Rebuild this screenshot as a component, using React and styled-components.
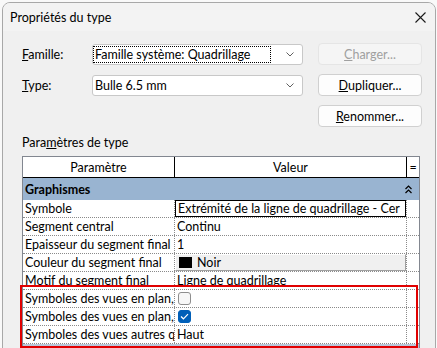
import React from "react";
import styled, { createGlobalStyle } from "styled-components";

const GlobalStyle = createGlobalStyle`
  body {
    margin: 0;
    background: #f9f9f9;
    font-family: Lato, "Liberation Sans", sans-serif;
    overflow: hidden;
  }
`;

const rows = [
  { name: "Symbole", kind: "edit", value: "Extrémité de la ligne de quadrillage - Cer" },
  { name: "Segment central", value: "Continu" },
  { name: "Epaisseur du segment final", value: "1" },
  { name: "Couleur du segment final", kind: "color", value: "Noir" },
  { name: "Motif du segment final", value: "Ligne de quadrillage" },
  { name: "Symboles des vues en plan,", kind: "check", checked: false },
  { name: "Symboles des vues en plan,", kind: "check", checked: true },
  { name: "Symboles des vues autres q", value: "Haut" },
];

export default function App() {
  return (
    <>
      <GlobalStyle />
      <Window>
        <TitleBar>
          <Title>Propriétés du type</Title>
          <svg width="11" height="11" viewBox="0 0 11 11">
            <path d="M0.5 0.5 L10.5 10.5 M10.5 0.5 L0.5 10.5" stroke="#1a1a1a" strokeWidth="1.1" />
          </svg>
        </TitleBar>
        <Body>
          <FormGrid>
            <Label>
              <u>F</u>amille:
            </Label>
            <Combo>
              <ComboText $focused>Famille système: Quadrillage</ComboText>
              <Chevron />
            </Combo>
            <Button disabled>
              <u>C</u>harger...
            </Button>

            <Label>
              <u>T</u>ype:
            </Label>
            <Combo>
              <ComboText>Bulle 6.5 mm</ComboText>
              <Chevron />
            </Combo>
            <Button>
              <u>D</u>upliquer...
            </Button>

            <span />
            <span />
            <Button>
              <u>R</u>enommer...
            </Button>
          </FormGrid>

          <SectionLabel>
            Para<u>m</u>ètres de type
          </SectionLabel>

          <Table>
            <HeaderRow>
              <HeaderCell>Paramètre</HeaderCell>
              <HeaderCell>Valeur</HeaderCell>
              <HeaderCell $last>=</HeaderCell>
            </HeaderRow>
            <GroupRow>
              <span>Graphismes</span>
              <svg width="7" height="9" viewBox="0 0 7 9">
                <path d="M0.5 4 L3.5 1 L6.5 4 M0.5 8 L3.5 5 L6.5 8" stroke="#000" strokeWidth="1.2" fill="none" />
              </svg>
            </GroupRow>
            {rows.map((r, i) => (
              <DataRow key={i}>
                <NameCell>{r.name}</NameCell>
                <ValueCell>
                  {r.kind === "edit" && <EditBox>{r.value}</EditBox>}
                  {r.kind === "color" && (
                    <ColorButton>
                      <Swatch />
                      {r.value}
                    </ColorButton>
                  )}
                  {r.kind === "check" && (
                    <CheckBox $checked={r.checked}>
                      {r.checked && (
                        <svg width="9" height="7" viewBox="0 0 9 7">
                          <path d="M1 3.5 L3.4 5.8 L8 1.2" stroke="#fff" strokeWidth="1.2" fill="none" />
                        </svg>
                      )}
                    </CheckBox>
                  )}
                  {!r.kind && r.value}
                </ValueCell>
                <EndCell />
              </DataRow>
            ))}
            <NextGroupRow />
          </Table>
        </Body>
        <Highlight />
      </Window>
    </>
  );
}

const Window = styled.div`
  position: relative;
  box-sizing: border-box;
  margin: 2px 0 0 2px;
  width: 434px;
  height: 360px;
  background: #f0f0f0;
  border: 1px solid #a8a8a8;
  border-radius: 8px 8px 0 0;
  overflow: hidden;
`;

const TitleBar = styled.div`
  height: 28px;
  display: flex;
  align-items: center;
  justify-content: space-between;
  padding: 0 9px 0 7px;
  background: #f3f3f3;
`;

const Title = styled.span`
  font-size: 12.5px;
  color: #000;
`;

const Body = styled.div`
  padding: 12px 12px 0 19px;
  font-size: 12.5px;
  color: #000;
`;

const FormGrid = styled.div`
  display: grid;
  grid-template-columns: 55px 211px 104px;
  grid-template-rows: 22px 22px 22px;
  column-gap: 15px;
  row-gap: 9px;
  align-items: center;
`;

const Label = styled.span`
  font-size: 12.5px;
`;

const Combo = styled.div`
  box-sizing: border-box;
  height: 21px;
  display: flex;
  align-items: center;
  justify-content: space-between;
  padding: 0 8px 0 1px;
  background: #fff;
  border: 1px solid #c8c8c8;
  border-radius: 3px;
`;

const ComboText = styled.span`
  flex: 1;
  line-height: 15px;
  padding-left: 1px;
  margin-right: 16px;
  outline: ${(p) => (p.$focused ? "1px dotted #000" : "none")};
`;

const Chevron = () => (
  <svg width="8" height="5" viewBox="0 0 8 5">
    <path d="M0.5 0.5 L4 4 L7.5 0.5" stroke="#606060" strokeWidth="1" fill="none" />
  </svg>
);

const Button = styled.button`
  box-sizing: border-box;
  height: 22px;
  padding: 0;
  font-family: inherit;
  font-size: 12.5px;
  color: ${(p) => (p.disabled ? "#a0a0a0" : "#000")};
  background: ${(p) => (p.disabled ? "#f5f5f5" : "#fdfdfd")};
  border: 1px solid ${(p) => (p.disabled ? "#e5e5e5" : "#d0d0d0")};
  border-radius: 4px;
`;

const SectionLabel = styled.div`
  margin-top: 8px;
  line-height: 16px;
`;

const Table = styled.div`
  box-sizing: border-box;
  margin-top: 5px;
  width: 398px;
  background: #fff;
  border: 1px solid #828790;
`;

const HeaderRow = styled.div`
  display: grid;
  grid-template-columns: 152px 232px 1fr;
  height: 20px;
  border-bottom: 1px solid #000;
`;

const HeaderCell = styled.div`
  display: flex;
  align-items: center;
  justify-content: center;
  border-right: ${(p) => (p.$last ? "none" : "1px solid #000")};
`;

const GroupRow = styled.div`
  height: 22px;
  display: flex;
  align-items: center;
  justify-content: space-between;
  padding: 0 7px 0 2px;
  background: #99b4d1;
  font-weight: 700;
`;

const DataRow = styled.div`
  display: grid;
  grid-template-columns: 152px 232px 1fr;
  height: 18px;
  border-bottom: 1px dotted #8a8a8a;
  box-sizing: border-box;
`;

const NameCell = styled.div`
  padding-left: 2px;
  line-height: 17px;
  white-space: nowrap;
  overflow: hidden;
  border-right: 1px dotted #8a8a8a;
`;

const ValueCell = styled.div`
  display: flex;
  align-items: center;
  padding-left: 2px;
  white-space: nowrap;
  overflow: hidden;
  border-right: 1px dotted #8a8a8a;
`;

const EndCell = styled.div``;

const EditBox = styled.div`
  box-sizing: border-box;
  margin-left: -2px;
  width: 232px;
  height: 17px;
  padding-left: 2px;
  line-height: 15px;
  border: 1px solid #000;
  overflow: hidden;
`;

const ColorButton = styled.div`
  box-sizing: border-box;
  margin-left: -2px;
  width: 232px;
  height: 17px;
  display: flex;
  align-items: center;
  gap: 5px;
  padding-left: 3px;
  background: #f0f0f0;
  border: 1px solid;
  border-color: #fff #a0a0a0 #a0a0a0 #fff;
`;

const Swatch = styled.span`
  width: 13px;
  height: 11px;
  background: #000;
`;

const CheckBox = styled.span`
  box-sizing: border-box;
  margin-left: 1px;
  width: 13px;
  height: 13px;
  display: flex;
  align-items: center;
  justify-content: center;
  border-radius: 3px;
  background: ${(p) => (p.$checked ? "#005fb8" : "#f7f7f7")};
  border: 1px solid ${(p) => (p.$checked ? "#005fb8" : "#8e8e8e")};
`;

const NextGroupRow = styled.div`
  height: 22px;
  background: #b9c8da;
`;

const Highlight = styled.div`
  position: absolute;
  left: 17px;
  top: 282px;
  width: 398px;
  height: 63px;
  box-sizing: border-box;
  border: 2px solid #e00000;
  pointer-events: none;
`;
